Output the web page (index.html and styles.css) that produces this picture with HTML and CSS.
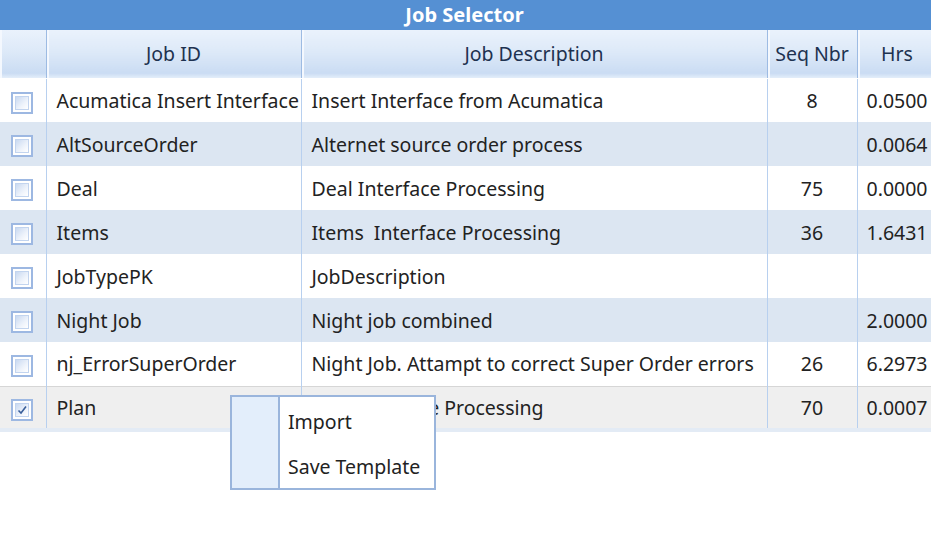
FILE: index.html
```html
<!DOCTYPE html>
<html>
<head>
<meta charset="utf-8">
<title>Job Selector</title>
<link rel="stylesheet" href="styles.css">
</head>
<body>
<div class="window">
  <div class="titlebar">Job Selector</div>
  <table class="grid">
    <colgroup>
      <col class="c-check"><col class="c-id"><col class="c-desc"><col class="c-seq"><col class="c-hrs">
    </colgroup>
    <thead>
      <tr>
        <th></th><th>Job ID</th><th>Job Description</th><th>Seq Nbr</th><th>Hrs</th>
      </tr>
    </thead>
    <tbody>
      <tr><td class="cb"><span class="box"></span></td><td>Acumatica Insert Interface</td><td>Insert Interface from Acumatica</td><td class="num">8</td><td class="num">0.0500</td></tr>
      <tr class="alt"><td class="cb"><span class="box"></span></td><td>AltSourceOrder</td><td>Alternet source order process</td><td class="num"></td><td class="num">0.0064</td></tr>
      <tr><td class="cb"><span class="box"></span></td><td>Deal</td><td>Deal Interface Processing</td><td class="num">75</td><td class="num">0.0000</td></tr>
      <tr class="alt"><td class="cb"><span class="box"></span></td><td>Items</td><td>Items&nbsp; Interface Processing</td><td class="num">36</td><td class="num">1.6431</td></tr>
      <tr><td class="cb"><span class="box"></span></td><td>JobTypePK</td><td>JobDescription</td><td class="num"></td><td class="num"></td></tr>
      <tr class="alt"><td class="cb"><span class="box"></span></td><td>Night Job</td><td>Night job combined</td><td class="num"></td><td class="num">2.0000</td></tr>
      <tr><td class="cb"><span class="box"></span></td><td>nj_ErrorSuperOrder</td><td>Night Job. Attampt to correct Super Order errors</td><td class="num">26</td><td class="num">6.2973</td></tr>
      <tr class="sel"><td class="cb"><span class="box checked"><svg viewBox="0 0 12 12" width="12" height="12"><path d="M2.5 6.5 L5 9 L10 2.5" fill="none" stroke="#3a5f9a" stroke-width="1.6"/></svg></span></td><td>Plan</td><td class="under">Plan Interface Processing</td><td class="num">70</td><td class="num">0.0007</td></tr>
    </tbody>
  </table>
  <div class="menu">
    <div class="menu-item">Import</div>
    <div class="menu-item">Save Template</div>
  </div>
</div>
</body>
</html>
```
FILE: styles.css
```css
html, body {
  margin: 0;
  padding: 0;
  background: #ffffff;
}
body {
  font-family: "Noto Sans", "Open Sans", sans-serif;
  font-size: 19.5px;
  color: #222;
}
.window {
  position: relative;
  width: 931px;
  height: 552px;
  overflow: hidden;
}
.titlebar {
  height: 30px;
  line-height: 30px;
  background: #5590d3;
  color: #ffffff;
  font-weight: bold;
  text-align: center;
  font-size: 20px;
  padding-right: 2px;
}
.grid {
  border-collapse: collapse;
  table-layout: fixed;
  width: 937px;
}
.c-check { width: 46px; }
.c-id { width: 255px; }
.c-desc { width: 466px; }
.c-seq { width: 90px; }
.c-hrs { width: 80px; }
.grid th {
  height: 48px;
  padding: 0;
  font-weight: normal;
  color: #1e3250;
  background: linear-gradient(#eaf2fc 0%, #dde9f8 45%, #cadcf3 90%, #e4eefa 100%);
  border-right: 1px solid #9dbbe3;
  box-shadow: inset 2px 0 0 #f4f8fe;
  border-bottom: 1px solid #ffffff;
  box-sizing: border-box;
  white-space: nowrap;
}
.grid td {
  height: 44px;
  padding: 0 0 0 10px;
  border-right: 1px solid #b8d0ef;
  white-space: nowrap;
  overflow: hidden;
  box-sizing: border-box;
}
.grid tr.alt td {
  background: #dce6f2;
}
.grid tr.sel td {
  background: #efefef;
  border-top: 1px solid #d6d6d6;
  border-bottom: 4px solid #e3ebf5;
}
.grid td.num {
  text-align: center;
  padding: 0 2px;
}
.grid td.cb {
  padding: 0 0 0 11px;
}
.box {
  display: inline-block;
  width: 22px;
  height: 22px;
  box-sizing: border-box;
  border: 2px solid #9db8e2;
  padding: 2px;
  background: #ffffff;
  vertical-align: middle;
  position: relative;
}
.box::before {
  content: "";
  display: block;
  width: 100%;
  height: 100%;
  box-sizing: border-box;
  border: 1px solid #c2d4ef;
  background: linear-gradient(135deg, #c9d9f1 0%, #eef3fb 60%, #ffffff 100%);
}
.box svg {
  position: absolute;
  left: 3px;
  top: 3px;
}
.menu {
  position: absolute;
  left: 230px;
  top: 395px;
  width: 206px;
  height: 95px;
  box-sizing: border-box;
  border: 2px solid #9ab5dc;
  background: linear-gradient(90deg, #e3eefb 0, #e3eefb 46px, #9ab5dc 46px, #9ab5dc 48px, #ffffff 48px);
  padding-top: 4px;
}
.menu-item {
  height: 45px;
  line-height: 42px;
  padding-left: 56px;
  color: #222;
  white-space: nowrap;
}
```
